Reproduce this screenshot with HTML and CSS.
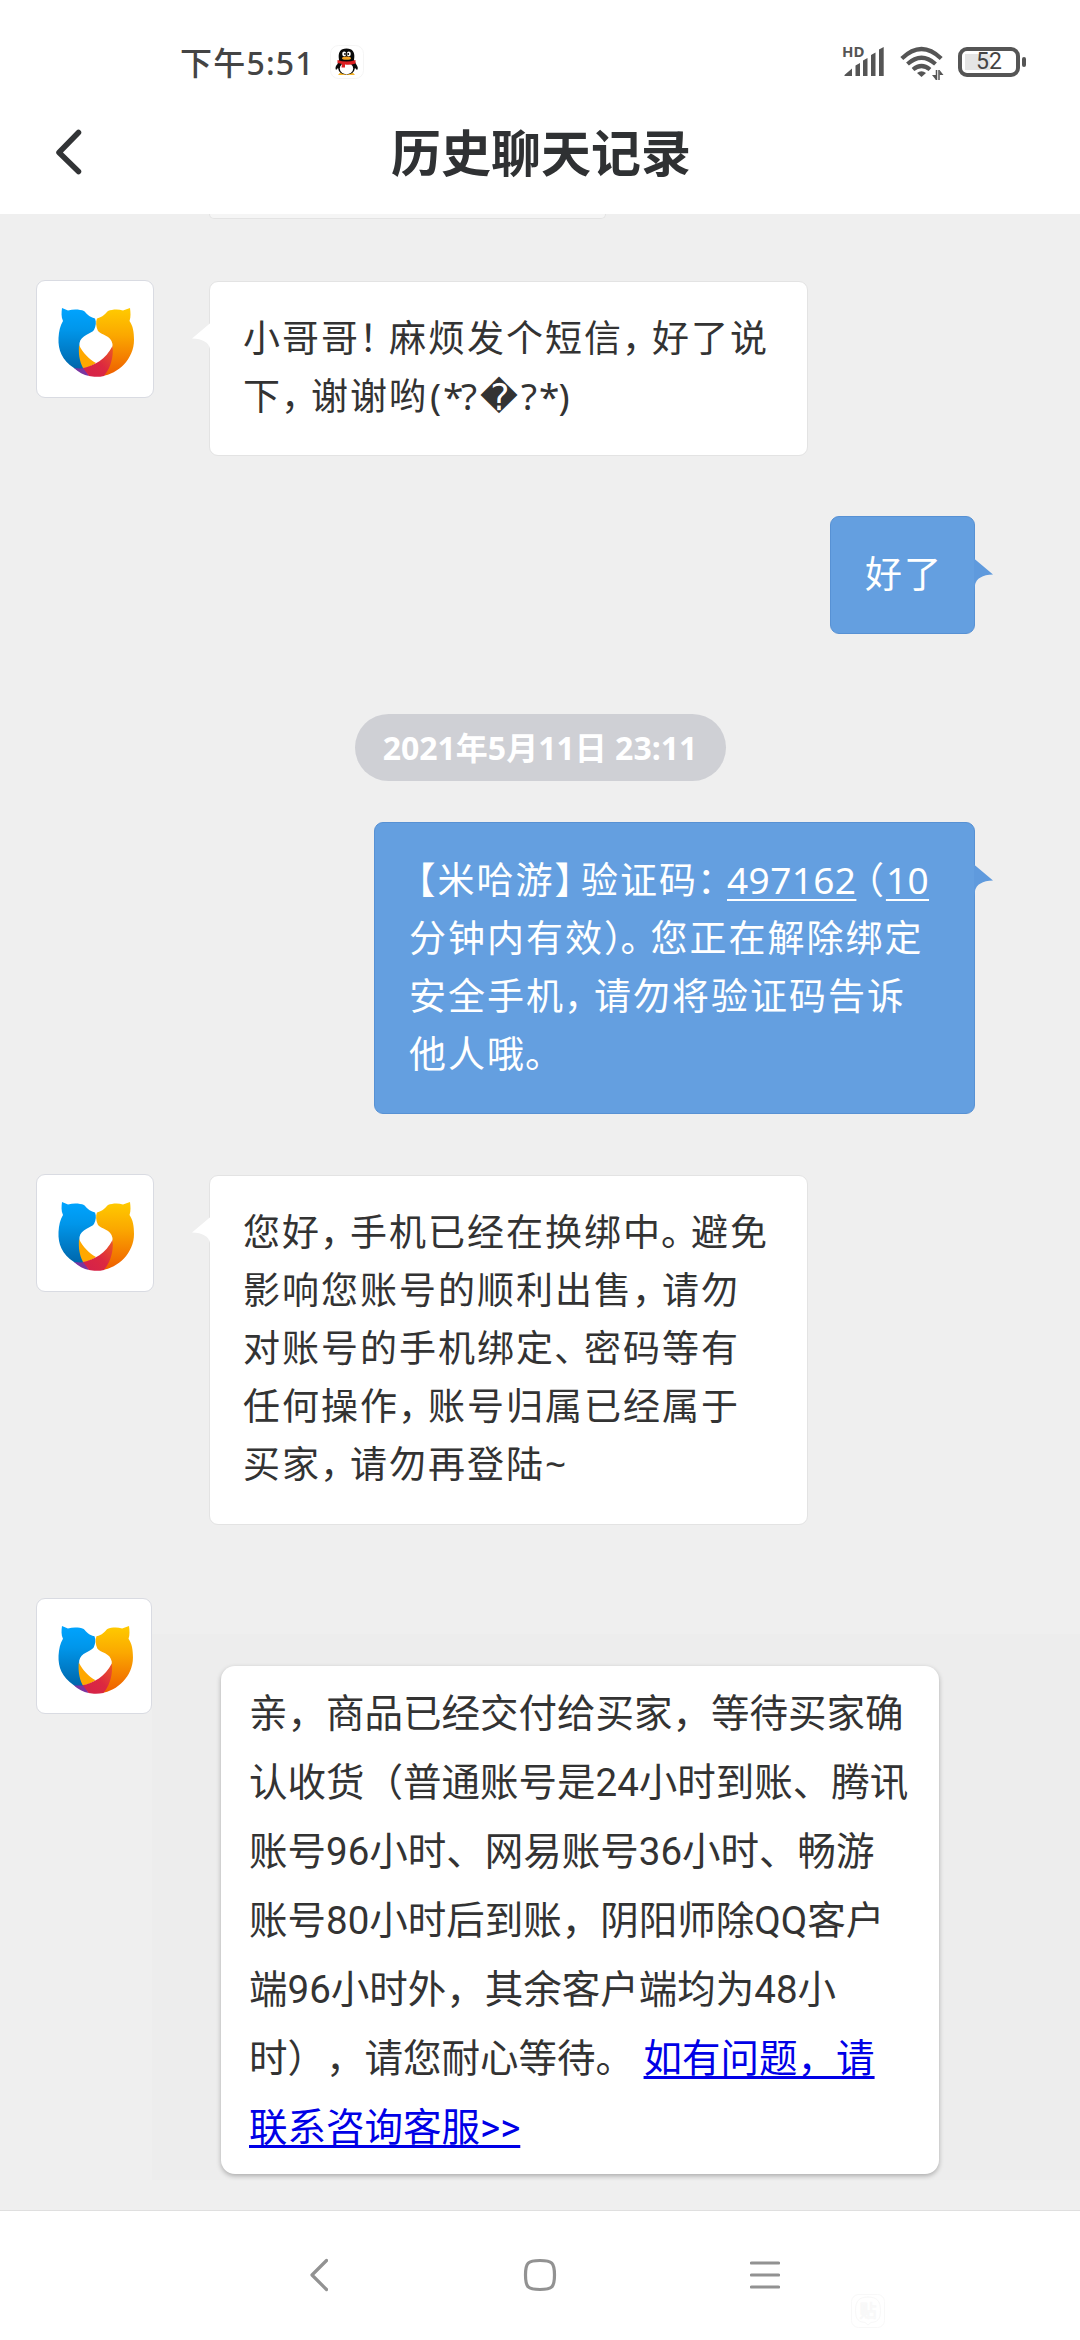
FILE: index.html
```html
<!DOCTYPE html>
<html lang="zh-CN">
<head>
<meta charset="utf-8">
<title>历史聊天记录</title>
<link rel="stylesheet" href="styles.css">
</head>
<body>
<svg class="defs" width="0" height="0" aria-hidden="true">
  <defs>
    <linearGradient id="blue" x1="0" y1="0" x2="0" y2="1"><stop offset="0" stop-color="#00a4ff"/><stop offset=".35" stop-color="#0096ea"/><stop offset="1" stop-color="#0064a8"/></linearGradient>
    <linearGradient id="gold" x1="0" y1="0" x2="0" y2="1"><stop offset="0" stop-color="#ffcb00"/><stop offset=".4" stop-color="#fba800"/><stop offset="1" stop-color="#ee5d00"/></linearGradient>
    <linearGradient id="red" x1="0" y1="1" x2="1" y2="0"><stop offset="0" stop-color="#d3204c"/><stop offset=".5" stop-color="#dc2840"/><stop offset="1" stop-color="#ec5a24"/></linearGradient>
    <symbol id="logo" viewBox="0 0 76 70">
      <path fill="url(#blue)" d="M4 1 L10 3.500 C16 2 22 2.500 26 4 C29 7 31 10 37 11.500 C38.500 15 38 19 36 23 C33 27 23 28 21.500 36 C21 44 22 54 26 61 C24 65 20 64 16 61 C4 53 0 43 0.500 31 C1 24 2 19 5 14 C3 10 3.500 5 4 1Z"/>
      <path fill="url(#gold)" d="M72 1 L65 3.500 C60 2 54 2.500 50 4 C47 7 45 10 39 11.500 C37.500 15 38 20 40 24 C43 28 53 28 54.500 37 C55 45 50 60 44 69 C60 67 76 52 76 33 C76 25 75 19 71.500 14 C73 10 72.500 5 72 1Z"/>
      <path fill="#ffa800" d="M21 38 C25 46 31 52 38 56 C34 59 29 61 25 61 C21 53 20.500 46 21 38Z"/>
      <path fill="#7a35a0" d="M16 61 C20 61.500 24 61.500 27 61 L31 69 C26 68 20 65 16 61Z"/>
      <path fill="url(#red)" d="M25 61 C36 59 48 52 54.500 39 C56 50 52 62 46 69 C41 70.200 35 70 31 69Z"/>
    </symbol>
    <symbol id="tail" viewBox="0 0 20 38"><path d="M20 0.500 L1 16.500 Q17 17 19 27 Q20 32 20 37Z"/></symbol>
  </defs>
</svg>
<div class="screen">
  <header class="top">
    <div class="status">
      <div class="status-left">
        <span class="clock">下午5:51</span>
        <svg class="qq" width="34" height="34" viewBox="0 0 34 34">
          <rect x=".5" y=".5" width="33" height="33" rx="8" fill="#fff" stroke="#f5f5f5"/>
          <path fill="#f5b52c" d="M8 30 Q10 26 16 28 L16 30Z M25 30 Q23 26 17 28 L17 30Z"/>
          <path fill="#090909" d="M9 15 Q7 3.500 16.500 3.500 Q26 3.500 24 15 L26 19 Q29 23 27 25 L25 23 Q24 29.500 16.500 29.500 Q9 29.500 8 23 L6 25 Q4.500 22 7.500 19Z"/>
          <ellipse cx="16.500" cy="23.500" rx="6.700" ry="5.700" fill="#fff"/>
          <path fill="#dc1f22" d="M7.500 15 Q16.500 18 25.500 15 L25.500 18.500 Q20 20.500 15 19.500 L15 22.500 L11.500 22.500 L12 19 L7.500 18Z"/>
          <ellipse cx="14.200" cy="9" rx="2" ry="2.400" fill="#fff"/><ellipse cx="18.800" cy="9" rx="2" ry="2.400" fill="#fff"/>
          <circle cx="15" cy="9" r=".9"/><circle cx="18.200" cy="9" r=".9"/>
          <ellipse cx="16.500" cy="13.200" rx="4.500" ry="1.600" fill="#f5a423"/>
        </svg>
      </div>
      <div class="status-right">
        <svg class="signal" width="42" height="34" viewBox="0 0 42 34" fill="#555">
          <text x="-1" y="12" class="hd">HD</text>
          <path d="M1.500 31V30L9 23.500V31ZM12.500 31V20.500L17 18V31ZM20 31V15.500L24.500 13V31ZM28 31V10L32.500 7.500V31ZM36 31V4.500L40.700 2V31Z"/>
        </svg>
        <svg class="wifi" width="44" height="36" viewBox="0 0 44 36" fill="none" stroke="#555" stroke-width="4.200">
          <path d="M1.800 13.500Q21.500 -5.500 41.200 13.500M7.500 19Q21.500 6.500 35.500 19M13 24.500Q21.500 17.500 30 24.500"/>
          <path d="M17 28Q21.500 24.500 26 28L21.500 32Z" fill="#555" stroke="none"/>
          <path d="M36.500 25V35M39 25V35" stroke-width="1.500"/><path d="M36 35L32 30H36ZM39.500 25L43.500 30H39.500Z" fill="#555" stroke="none"/>
        </svg>
        <div class="battery"><span>52</span></div>
      </div>
    </div>
    <div class="bar">
      <svg width="28" height="48" viewBox="0 0 28 48" fill="none" stroke="#323436" stroke-width="5.500" stroke-linecap="round" stroke-linejoin="round"><path d="M23.500 4.500L4 24.500L23.500 43.500"/></svg>
      <h1>历史聊天记录</h1>
    </div>
  </header>

  <main class="chat">
    <div class="previous"></div>

    <div class="row first">
      <div class="avatar"><svg><use href="#logo"/></svg></div>
      <div class="bubble them">
        <svg class="tail"><use href="#tail"/></svg>
        <p>小哥哥<i>！</i>麻烦发个短信<i>，</i>好了说</p>
        <p>下<i>，</i>谢谢哟<span class="face"><b class="start">(</b><b class="star">*</b><b>?</b><b class="unknown">�</b><b>?</b><b class="star">*</b><b class="end">)</b></span></p>
      </div>
    </div>

    <div class="row mine short">
      <div class="bubble me"><svg class="tail"><use href="#tail"/></svg><p>好了</p></div>
    </div>

    <time class="stamp">2021年5月11日 23:11</time>

    <div class="row mine code">
      <div class="bubble me">
        <svg class="tail"><use href="#tail"/></svg>
        <p><span class="half open-b">【</span>米哈游<span class="half close-b">】</span>验证码<i>：</i><u>497162</u><span class="half open-p">（</span><u>10</u></p>
        <p>分钟内有效<span class="half close-p">）</span><i>。</i>您正在解除绑定</p>
        <p>安全手机<i>，</i>请勿将验证码告诉</p>
        <p>他人哦<i>。</i></p>
      </div>
    </div>

    <div class="row second">
      <div class="avatar"><svg><use href="#logo"/></svg></div>
      <div class="bubble them">
        <svg class="tail"><use href="#tail"/></svg>
        <p>您好<i>，</i>手机已经在换绑中<i>。</i>避免</p>
        <p>影响您账号的顺利出售<i>，</i>请勿</p>
        <p>对账号的手机绑定<i>、</i>密码等有</p>
        <p>任何操作<i>，</i>账号归属已经属于</p>
        <p>买家<i>，</i>请勿再登陆~</p>
      </div>
    </div>

    <div class="row third">
      <div class="avatar small"><svg><use href="#logo"/></svg></div>
      <div class="panel">
        <div class="card">亲，商品已经交付给买家，等待买家确<br>认收货（普通账号是24小时到账、腾讯<br>账号96小时、网易账号36小时、畅游<br>账号80小时后到账，阴阳师除QQ客户<br>端96小时外，其余客户端均为48小<br>时），请您耐心等待。 <a href="#">如有问题，请<br>联系咨询客服&gt;&gt;</a></div>
      </div>
    </div>
  </main>

  <nav class="keys">
    <svg width="18" height="34" viewBox="0 0 18 34"><path d="M16.500 2.500L2 17L16.500 31.500"/></svg>
    <svg width="34" height="34" viewBox="0 0 34 34"><path d="M17 2.500C29 2.500 31.500 4.500 31.500 17S29 31.500 17 31.500S2.500 29.500 2.500 17S5 2.500 17 2.500Z"/></svg>
    <svg width="30" height="34" viewBox="0 0 30 34"><path d="M1.500 5H28.500M1.500 17H28.500M1.500 29H28.500"/></svg>
    <svg class="mark" width="34" height="34" viewBox="0 0 34 34"><rect x=".5" y=".5" width="33" height="33" rx="7"/><path d="M17 3C8 3 4.500 7 4.500 16.500S8 28 14 28.500L17 31L20 28.500C26 28 29.500 26 29.500 16.500S26 3 17 3Z"/><text x="17" y="23">贴</text></svg>
  </nav>
</div>
</body>
</html>
```
FILE: styles.css
```css
* { box-sizing: border-box; }
body { margin: 0; background: #fff; }
.defs { position: absolute; }
.screen {
  width: 1080px; height: 2340px; overflow: hidden;
  display: flex; flex-direction: column;
  font-family: "Noto Sans", "Noto Sans CJK SC", sans-serif;
  text-spacing-trim: space-all;
  color: #333;
}

/* Status bar and title */
.top { height: 214px; flex: none; background: #fff; }
.status { height: 90px; padding: 45px 60px 0 180px; display: flex; justify-content: space-between; align-items: flex-start; }
.status-left { display: flex; align-items: flex-start; height: 34px; }
.clock { width: 150px; font-size: 32px; line-height: 36px; letter-spacing: 1.2px; font-weight: 500; color: #444; white-space: nowrap; }
.status-right { display: flex; align-items: flex-start; }
.signal { overflow: visible; }
.hd { font: 700 15px "Noto Sans", sans-serif; }
.wifi { margin-left: 15px; }
.battery {
  margin: 2px 0 0 14px; width: 62px; height: 30px; position: relative;
  border: 4px solid #555; border-radius: 9px; padding: 3px;
  display: flex; align-items: center; justify-content: center;
  background: linear-gradient(#e5e5e5, #e5e5e5) 3px 3px / 25px 16px no-repeat;
  font: 400 23px/20px Roboto, sans-serif; color: #444;
}
.battery::after { content: ""; position: absolute; right: -10px; top: 6px; width: 4px; height: 10px; border-radius: 2px; background: #555; }
.bar { height: 124px; display: grid; grid-template-columns: 80px 1fr 80px; align-items: center; padding: 0 53px 0 55px; }
h1 { margin: 2px 0 0; text-align: center; font-size: 50px; line-height: 72px; font-weight: 700; color: #2f3133; }

/* Conversation */
.chat { flex: none; height: 1997px; background: #efefef; border-bottom: 1px solid #dfdfdf; display: flex; flex-direction: column; }
.previous { width: 397px; height: 5px; margin-left: 209px; flex: none; background: #f5f5f5; border: 1px solid #e3e3e3; border-top: 0; border-radius: 0 0 6px 6px; }
.row { display: flex; align-items: flex-start; flex: none; padding-left: 36px; }
.first { margin-top: 61px; }
.second { margin-top: 60px; }
.third { margin-top: 73px; }
.mine { justify-content: flex-end; padding-right: 105px; }
.short { margin-top: 60px; }
.avatar { width: 118px; height: 118px; flex: none; border: 1px solid #d9dbe2; border-radius: 9px; background: #fff; padding: 26px 20px 0 21px; }
.avatar svg { display: block; width: 76px; height: 70px; }
.avatar.small { width: 116px; height: 116px; }
.avatar.small svg { width: 75px; height: 69px; }
.bubble { position: relative; border-radius: 9px; font-size: 37px; letter-spacing: 2px; }
.bubble p { margin: 0; height: 58px; line-height: 58px; white-space: nowrap; }
.bubble i { display: inline-block; width: 29px; font-style: normal; text-indent: -1px; font-feature-settings: "halt"; }
.them { width: 599px; margin: 1px 0 0 55px; background: #fff; border: 1px solid #e3e3e3; padding: 27px 0 30px 33px; }
.me { background: #649fe0; border: 1px solid #5791d4; color: #fff; padding: 28px 0 29px 34px; }
.short .bubble { width: 145px; height: 118px; }
.code .bubble { width: 601px; height: 292px; }
.tail { position: absolute; width: 20px; height: 38px; fill: #fff; left: -19px; top: 40px; }
.me .tail { left: auto; right: -20px; top: 41px; fill: #5f9add; transform: scaleX(-1); }
.first .bubble { height: 175px; }
.second .bubble { height: 350px; }
.stamp {
  align-self: center; flex: none; margin: 80px 0 41px; width: 371px; height: 67px; border-radius: 34px;
  background: #cfd0d5; color: #fff; font-size: 32px; line-height: 67px; font-weight: 700; text-align: center; white-space: nowrap;
}
.bubble u { letter-spacing: .4px; text-decoration-thickness: 2px; text-underline-offset: 5px; text-decoration-skip-ink: none; }
.half { font-feature-settings: "halt"; }
.open-b { margin-left: 8px; }
.close-b { margin-right: 6px; }
.open-p { margin-left: 9px; }
.close-p { margin-right: -3px; }
.face b { display: inline-block; width: 20px; font-weight: 400; letter-spacing: 0; text-align: center; }
.face .start { width: 15px; }
.face .star { width: 16px; }
.face .end { width: 18px; }
.face .unknown { width: 40px; font-family: "DejaVu Sans", sans-serif; line-height: 1; }

.panel { flex: 1; margin-top: 36px; height: 546px; padding: 32px 0 0 69px; background: #ededed; }
.card {
  width: 718px; height: 508px; border-radius: 14px; background: #fff;
  padding: 13px 0 0 28px; box-shadow: 0 2px 5px rgba(0,0,0,.28);
  font-family: Roboto, "Noto Sans CJK SC", sans-serif; font-size: 38.5px; line-height: 69px; white-space: nowrap;
}
.card a { color: #0000e6; text-decoration-thickness: 3px; text-underline-offset: 4px; text-decoration-skip-ink: none; }

/* Navigation keys */
.keys { height: 129px; padding: 47px 0 0 310px; display: flex; align-items: flex-start; fill: none; stroke: #929292; stroke-width: 3.2; stroke-linecap: round; stroke-linejoin: round; }
.keys svg:nth-child(2) { margin-left: 195px; }
.keys svg:nth-child(3) { margin-left: 193px; }
.keys .mark { margin: 36px 0 0 71px; stroke: #f8f8f8; stroke-width: 1; }
.mark text { font: 17px "Noto Sans CJK SC", sans-serif; text-anchor: middle; }
```
